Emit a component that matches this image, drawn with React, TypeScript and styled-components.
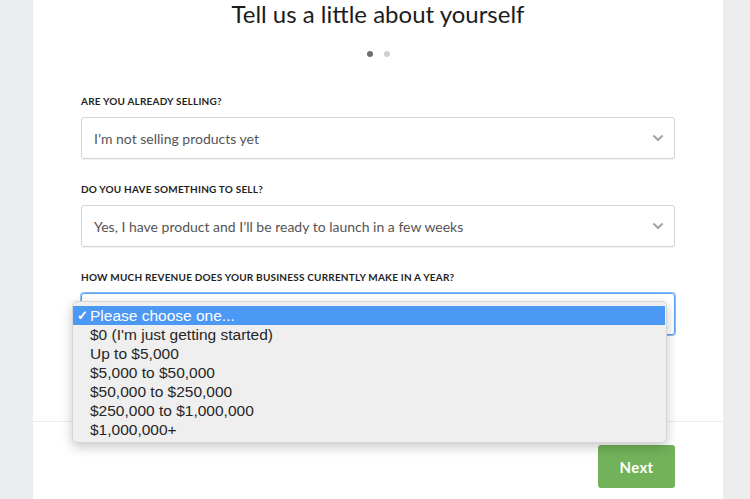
import React from "react";
import styled, { createGlobalStyle } from "styled-components";

const GlobalStyle = createGlobalStyle`
  html, body {
    margin: 0;
    padding: 0;
    background: #ebedee;
    font-family: "Lato", "Open Sans", sans-serif;
  }
  * { box-sizing: border-box; }
`;

const questions = [
  { label: "Are you already selling?", value: "I’m not selling products yet" },
  {
    label: "Do you have something to sell?",
    value: "Yes, I have product and I’ll be ready to launch in a few weeks",
  },
];

const revenueOptions = [
  "Please choose one...",
  "$0 (I'm just getting started)",
  "Up to $5,000",
  "$5,000 to $50,000",
  "$50,000 to $250,000",
  "$250,000 to $1,000,000",
  "$1,000,000+",
];

function Chevron() {
  return (
    <svg width="12" height="8" viewBox="0 0 12 8">
      <path d="M1.5 1.5 L6 6 L10.5 1.5" fill="none" stroke="#a3a3a3" strokeWidth="2" />
    </svg>
  );
}

function App() {
  return (
    <>
      <GlobalStyle />
      <Page>
        <Card>
          <Title>Tell us a little about yourself</Title>
          <Dots>
            <Dot active />
            <Dot />
          </Dots>
          <Form>
            {questions.map((q) => (
              <Field key={q.label}>
                <Label>{q.label}</Label>
                <SelectBox>
                  <span>{q.value}</span>
                  <Chevron />
                </SelectBox>
              </Field>
            ))}
            <Field>
              <Label>How much revenue does your business currently make in a year?</Label>
              <SelectBox focused />
              <Menu>
                {revenueOptions.map((opt, i) => (
                  <Option key={opt} selected={i === 0}>
                    <Check>{i === 0 ? "✓" : ""}</Check>
                    {opt}
                  </Option>
                ))}
              </Menu>
            </Field>
          </Form>
          <Footer>
            <NextButton>Next</NextButton>
          </Footer>
        </Card>
      </Page>
    </>
  );
}

const Page = styled.div`
  height: 499px;
  overflow: hidden;
  padding: 0 27px 0 33px;
`;

const Card = styled.div`
  width: 690px;
  height: 100%;
  background: #fff;
  display: flex;
  flex-direction: column;
`;

const Title = styled.h1`
  margin: 0;
  margin-top: -1px;
  text-align: center;
  font-weight: 400;
  font-size: 24px;
  line-height: 30px;
  color: #1c1c1c;
`;

const Dots = styled.div`
  display: flex;
  justify-content: center;
  gap: 11px;
  margin-top: 22px;
`;

const Dot = styled.span<{ active?: boolean }>`
  width: 6px;
  height: 6px;
  border-radius: 50%;
  background: ${(p) => (p.active ? "#6f6f6f" : "#cfcfcf")};
`;

const Form = styled.div`
  padding: 38px 48px 0;
  display: flex;
  flex-direction: column;
  gap: 24px;
`;

const Field = styled.div`
  position: relative;
`;

const Label = styled.div`
  font-size: 10px;
  font-weight: 700;
  text-transform: uppercase;
  letter-spacing: 0.2px;
  color: #1f1f1f;
  line-height: 12px;
  margin-bottom: 10px;
`;

const SelectBox = styled.div<{ focused?: boolean }>`
  height: 42px;
  border: 1px solid ${(p) => (p.focused ? "#5a9ff2" : "#d4d4d4")};
  box-shadow: ${(p) => (p.focused ? "0 0 0 1px #8dbdf6" : "0 1px 1px rgba(0,0,0,0.06)")};
  border-radius: 3px;
  display: flex;
  align-items: center;
  justify-content: space-between;
  padding: 0 10px 0 12px;
  font-size: 14px;
  color: #555;
`;

const Menu = styled.div`
  position: absolute;
  left: -9px;
  top: 30px;
  width: 595px;
  padding: 4px 0 3px;
  background: #efefef;
  border: 1px solid #d6d6d6;
  border-radius: 5px;
  box-shadow: 0 4px 12px rgba(0, 0, 0, 0.22);
  font-family: "Liberation Sans", Arial, sans-serif;
  font-size: 15.5px;
  z-index: 2;
`;

const Option = styled.div<{ selected?: boolean }>`
  height: 19px;
  line-height: 19px;
  display: flex;
  align-items: center;
  padding-left: 2px;
  margin-right: 1px;
  color: ${(p) => (p.selected ? "#fff" : "#262626")};
  background: ${(p) => (p.selected ? "#4b98f5" : "transparent")};
`;

const Check = styled.span`
  width: 15px;
  font-size: 13px;
  font-weight: 700;
  text-align: center;
`;

const Footer = styled.div`
  margin-top: 86px;
  border-top: 1px solid #ececec;
  padding: 23px 48px 0;
  display: flex;
  justify-content: flex-end;
`;

const NextButton = styled.button`
  width: 77px;
  height: 43px;
  border: none;
  border-radius: 3px;
  background: #72b25a;
  color: #fff;
  font-family: "Lato", sans-serif;
  font-weight: 700;
  font-size: 15px;
  letter-spacing: 0.3px;
`;

export default App;
